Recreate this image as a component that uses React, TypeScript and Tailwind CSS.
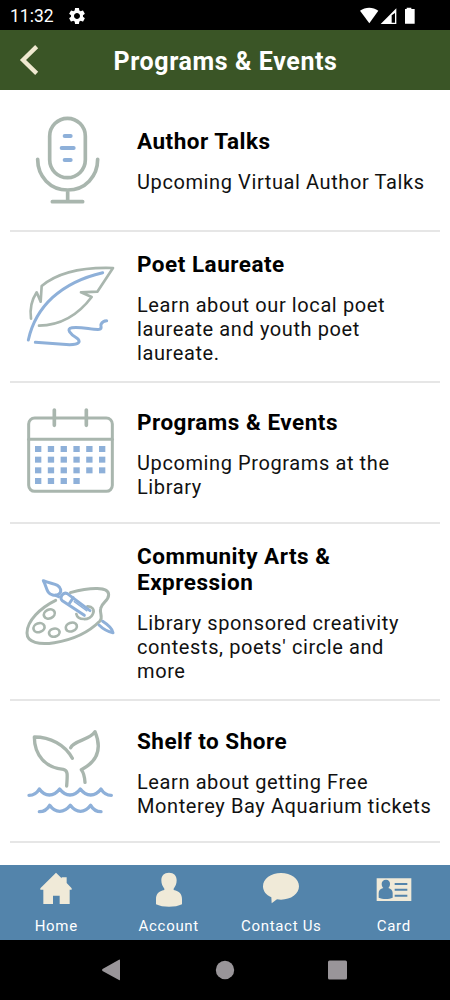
import type { ReactNode } from 'react';

interface Program {
  id: number;
  title: string;
  description: string;
  icon: ReactNode;
  rowClass: string;
}

const SAGE = '#a9b6ae';
const BLUE = '#8eb0d9';

function MicIcon() {
  return (
    <svg width="110" height="110" viewBox="0 0 330 330" fill="none" stroke={SAGE} strokeWidth="11" strokeLinecap="round">
      <rect x="104" y="40" width="107" height="178" rx="53.5" />
      <path d="M68 163c0 52 38 92 90 92s90-40 90-92M158 255v34M112 290h91" />
      <path d="M149 93h18M140 129h36M149 165h18" stroke={BLUE} strokeWidth="12" />
    </svg>
  );
}

function FeatherIcon() {
  return (
    <svg width="110" height="105" viewBox="0 -3 330 315" fill="none" stroke={SAGE} strokeWidth="8" strokeLinecap="round" strokeLinejoin="round">
      <path d="M48 191c-4-28 2-56 17-79l12 28 3-47c50-42 123-57 214-54l-47 71-49 2 32 14c-42 56-98 85-158 86" />
      <path d="M40 255C62 155 138 82 263 53" stroke={BLUE} strokeWidth="9" />
      <path d="M61 262l103 7c29 0 36-10 20-21-18-11-32-27-13-30 27-4 62 7 82 5 10-2 3-9 5-15 3-7 9-11 17-11" stroke={BLUE} strokeWidth="9" />
    </svg>
  );
}

function CalendarIcon() {
  const rows = [6, 6, 6, 4];
  return (
    <svg width="110" height="105" viewBox="0 0 330 315" fill="none" stroke={SAGE} strokeWidth="9" strokeLinecap="round">
      <rect x="41" y="54" width="251" height="220" rx="18" />
      <path d="M41 118h251" />
      <path d="M118 30v46M214 30v46" strokeWidth="11" />
      {rows.map((count, r) =>
        Array.from({ length: count }, (_, c) => (
          <rect key={`${r}-${c}`} x={60 + c * 38.4} y={138 + r * 32} width="19" height="18" fill={BLUE} stroke="none" />
        ))
      )}
    </svg>
  );
}

function PaletteIcon() {
  return (
    <svg width="110" height="95" viewBox="0 -3 330 285" fill="none" stroke={SAGE} strokeWidth="9" strokeLinecap="round" strokeLinejoin="round">
      <path d="M122 106c-45 22-86 61-86 98 0 29 38 36 82 29 52-8 103-31 137-65 10-11-2-24 2-38 4-19 24-22 24-41 0-24-53-23-115-6" />
      <g strokeWidth="8">
        <ellipse cx="103" cy="147" rx="17" ry="13" transform="rotate(-25 103 147)" />
        <ellipse cx="72" cy="188" rx="17" ry="13" transform="rotate(-20 72 188)" />
        <ellipse cx="118" cy="203" rx="16" ry="12" transform="rotate(-12 118 203)" />
        <ellipse cx="169" cy="186" rx="17" ry="13" transform="rotate(-20 169 186)" />
        <path d="M184 147c4 20 40 20 49 1 8-14-2-25-16-24" />
      </g>
      <g stroke={BLUE}>
        <path d="M85 47c25 11 48 8 52 27 2 12-10 19-24 16-19-4-17-24-28-43z" />
        <path d="M122 91l9 4" />
        <path d="M208 151l-66-44c-11-8 2-28 15-21l68 51M175 98l-13 19" />
        <path d="M178 110l37 27" strokeWidth="5" />
        <path d="M263 169c17 11 29 22 31 34-15-3-32-13-42-23" />
      </g>
    </svg>
  );
}

function WhaleTailIcon() {
  return (
    <svg width="110" height="105" viewBox="0 0 330 315" fill="none" stroke={SAGE} strokeWidth="10" strokeLinecap="round" strokeLinejoin="round">
      <path d="M155 198c2-31 5-47-10-50-52-4-87-42-87-97 47 0 92 22 114 64" />
      <path d="M167 83c12-23 57-22 73-48 21 50 8 89-41 114 8 10 10 22 11 38" />
      <g stroke={BLUE}>
        <path d="M42 226c14 0 23-5 31-19 17 24 43 24 61 0 18 24 44 24 62 0 18 24 44 24 62 0 8 14 17 19 31 19" />
        <path d="M73 275c14 0 23-5 31-19 17 24 43 24 62 0 18 24 43 24 61 0 8 14 17 19 31 19" />
      </g>
    </svg>
  );
}

const programs: Program[] = [
  { id: 1, title: 'Author Talks', description: 'Upcoming Virtual Author Talks', icon: <MicIcon />, rowClass: 'h-[142px]' },
  {
    id: 2,
    title: 'Poet Laureate',
    description: 'Learn about our local poet laureate and youth poet laureate.',
    icon: <FeatherIcon />,
    rowClass: 'h-[151px]',
  },
  { id: 3, title: 'Programs & Events', description: 'Upcoming Programs at the Library', icon: <CalendarIcon />, rowClass: 'h-[141px]' },
  {
    id: 4,
    title: 'Community Arts & Expression',
    description: "Library sponsored creativity contests, poets' circle and more",
    icon: <PaletteIcon />,
    rowClass: 'h-[177px]',
  },
  {
    id: 5,
    title: 'Shelf to Shore',
    description: 'Learn about getting Free Monterey Bay Aquarium tickets',
    icon: <WhaleTailIcon />,
    rowClass: 'h-[142px] pt-[2px]',
  },
];

const tabs = [
  {
    label: 'Home',
    icon: (
      <svg width="36" height="36" viewBox="0 0 108 108" fill="#f0ead8">
        <path d="M54 2l17 17v-3h15v17l15 16v4h-6v43H65V71H45v25H16V53H7v-4z" />
      </svg>
    ),
  },
  {
    label: 'Account',
    icon: (
      <svg width="36" height="36" viewBox="0 0 108 108" fill="#f0ead8">
        <path d="M54 2c15 0 23 9 23 23 0 11-4 18-9 25v4c17 4 25 12 25 27v16c-20 10-58 10-78 0V81c0-15 8-23 25-27v-4c-5-7-9-14-9-25C31 11 39 2 54 2z" />
      </svg>
    ),
  },
  {
    label: 'Contact Us',
    icon: (
      <svg width="36" height="36" viewBox="0 0 108 108" fill="#f0ead8">
        <path d="M54 3c30 0 54 17 54 40S84 83 54 83c-4 0-8 0-12-1L26 94l-1-18C9 69 0 57 0 43 0 20 24 3 54 3z" />
      </svg>
    ),
  },
  {
    label: 'Card',
    icon: (
      <svg width="36" height="36" viewBox="0 0 108 108">
        <path fill="#f0ead8" d="M2 19h104v68H2z" />
        <path fill="#5384ab" d="M30 23c8 0 12 5 12 12 0 6-2 10-5 13 8 3 13 7 13 15v14c-11 5-30 5-42 0V63c0-8 5-12 14-15-3-3-5-7-5-13 0-7 5-12 13-12zM56 33h38v6H56zM56 50h38v6H56zM56 68h38v6H56z" />
      </svg>
    ),
  },
];

function StatusBar() {
  return (
    <div className="flex h-[30px] items-center bg-black pt-px pl-[10px] pr-[34px] text-white">
      <span className="text-[17.5px] leading-5">11:32</span>
      <svg className="ml-[13px]" width="20" height="20" viewBox="0 0 24 24" fill="white">
        <path d="M19.14 12.94c.04-.3.06-.61.06-.94 0-.32-.02-.64-.07-.94l2.03-1.58c.18-.14.23-.41.12-.61l-1.92-3.32c-.12-.22-.37-.29-.59-.22l-2.39.96c-.5-.38-1.03-.7-1.62-.94l-.36-2.54c-.04-.24-.24-.41-.48-.41h-3.84c-.24 0-.43.17-.47.41l-.36 2.54c-.59.24-1.13.57-1.62.94l-2.39-.96c-.22-.08-.47 0-.59.22L2.74 8.87c-.12.21-.08.47.12.61l2.03 1.58c-.05.3-.09.63-.09.94s.02.64.07.94l-2.03 1.58c-.18.14-.23.41-.12.61l1.92 3.32c.12.22.37.29.59.22l2.39-.96c.5.38 1.03.7 1.62.94l.36 2.54c.05.24.24.41.48.41h3.84c.24 0 .44-.17.47-.41l.36-2.54c.59-.24 1.13-.56 1.62-.94l2.39.96c.22.08.47 0 .59-.22l1.92-3.32c.12-.22.07-.47-.12-.61l-2.01-1.58zM12 15.6c-1.98 0-3.6-1.62-3.6-3.6s1.62-3.6 3.6-3.6 3.6 1.62 3.6 3.6-1.62 3.6-3.6 3.6z" />
      </svg>
      <svg className="ml-auto" width="58" height="30" viewBox="0 0 174 90" fill="white">
        <path d="M6 29c16-12 39-12 55 0L34 67z" />
        <path fillRule="evenodd" d="M68 69l47-47v47zM101 43v22h10V36z" />
        <path d="M146 20h14v4h10v44h-29V24h5z" />
      </svg>
    </div>
  );
}

export default function App() {
  return (
    <div className="flex h-[1000px] w-[450px] flex-col overflow-hidden bg-white font-['Roboto',sans-serif]">
      <StatusBar />

      <header className="flex h-[60px] shrink-0 items-center bg-[#3a5526]">
        <button className="w-[60px]" aria-label="Back">
          <svg width="60" height="60" viewBox="0 0 180 180" fill="none" stroke="#efe9d0" strokeWidth="13">
            <path d="M110 50L69 90l41 40" />
          </svg>
        </button>
        <h1 className="flex-1 pt-[4px] pr-[59px] text-center text-[25px] leading-[30px] font-bold tracking-[0.6px] whitespace-nowrap text-white">
          Programs &amp; Events
        </h1>
      </header>

      <main className="flex-1 overflow-hidden px-[10px]">
        {programs.map((program) => (
          <div key={program.id} className={`flex items-center border-b-2 border-[#e6e6e6] ${program.rowClass}`}>
            <div className="w-[127px] shrink-0 pl-[5px]">{program.icon}</div>
            <div className="flex-1 pt-[2px] pr-[6px]">
              <h2 className="text-[22.5px] leading-[26px] font-bold tracking-[0.5px] text-black">{program.title}</h2>
              <p className="mt-4 text-[20px] leading-6 tracking-[0.6px] text-[#111]">{program.description}</p>
            </div>
          </div>
        ))}
      </main>

      <nav className="grid h-[75px] shrink-0 grid-cols-4 bg-[#5384ab]">
        {tabs.map((tab) => (
          <button key={tab.label} className="flex flex-col items-center pt-[7px] text-white">
            {tab.icon}
            <span className="mt-[8px] text-[15px] leading-5 tracking-[0.7px]">{tab.label}</span>
          </button>
        ))}
      </nav>

      <div className="flex h-[60px] shrink-0 items-center justify-center bg-black">
        <svg width="450" height="60" viewBox="0 0 450 60" fill="#999599">
          <path d="M120 20.5v19q0 1-1 .4L102.500 31q-1-1 0-2L119 19.700q1-.6 1 .8z" />
          <circle cx="225" cy="30" r="9.200" />
          <rect x="328" y="20.500" width="19" height="19" rx="1.500" />
        </svg>
      </div>
    </div>
  );
}
